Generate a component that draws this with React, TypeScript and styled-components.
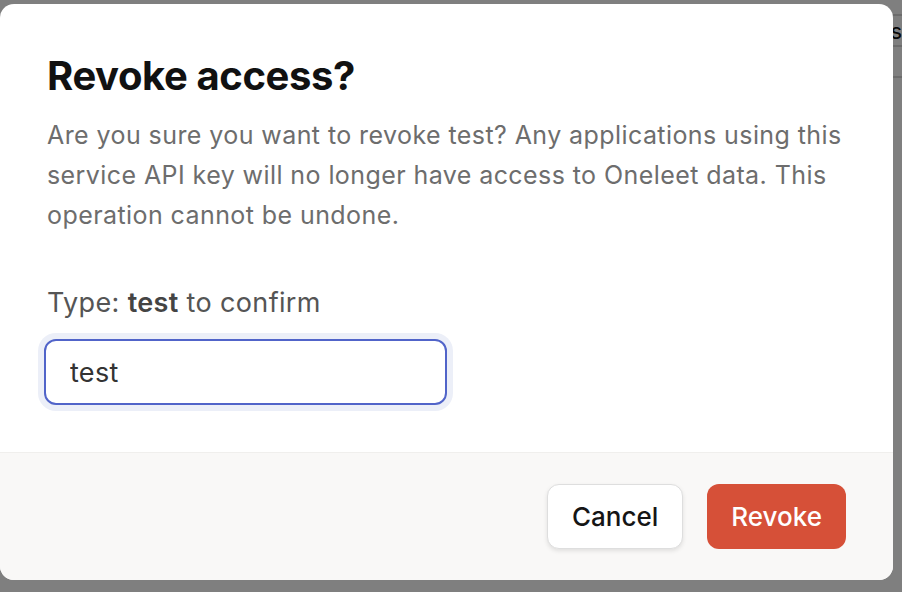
import React, { useState } from "react";
import styled, { createGlobalStyle } from "styled-components";

const GlobalStyle = createGlobalStyle`
    html, body {
        margin: 0;
        height: 100%;
        background: #ffffff;
        font-family: Inter, "Noto Sans", "DejaVu Sans", sans-serif;
    }

    * {
        box-sizing: border-box;
    }
`;

const Page = styled.div`
    height: 592px;
    overflow: hidden;
    padding-top: 14px;
`;

const TableRow = styled.div`
    height: 31px;
    border-top: 2px solid #d9d9d9;
    display: flex;
    justify-content: flex-end;
    align-items: center;
    font-size: 22px;
    color: #111;
`;

const Overlay = styled.div`
    position: fixed;
    inset: 0;
    background: rgba(0, 0, 0, 0.5);
    display: flex;
    align-items: flex-start;
    padding-top: 4px;
`;

const Dialog = styled.div`
    width: 893px;
    height: 576px;
    background: #ffffff;
    border-radius: 14px;
    overflow: hidden;
    display: flex;
    flex-direction: column;
`;

const Body = styled.div`
    flex: 1;
    padding: 48px 47px 0;
`;

const Title = styled.h2`
    margin: 0;
    font-size: 40px;
    line-height: 48px;
    font-weight: 700;
    letter-spacing: -0.4px;
    color: #111111;
`;

const Description = styled.p`
    margin: 15px 0 0;
    font-size: 25px;
    line-height: 40px;
    letter-spacing: 0.42px;
    color: #6d6d6d;
`;

const Label = styled.label`
    display: block;
    margin-top: 51px;
    font-size: 27px;
    line-height: 34px;
    letter-spacing: 0.35px;
    color: #555555;

    strong {
        font-weight: 600;
        color: #444444;
    }
`;

const Input = styled.input`
    display: block;
    margin: 19px -3px 0;
    width: 403px;
    height: 66px;
    padding: 0 24px;
    border: 2px solid #5164c9;
    border-radius: 12px;
    box-shadow: 0 0 0 6px #eceff8;
    outline: none;
    font-family: inherit;
    font-size: 27px;
    letter-spacing: 0.3px;
    color: #333333;
    background: #ffffff;
`;

const Footer = styled.div`
    height: 128px;
    background: #f9f8f7;
    border-top: 1px solid #f0efed;
    display: flex;
    justify-content: flex-end;
    align-items: center;
    gap: 24px;
    padding: 0 47px;
`;

const Button = styled.button<{ $danger?: boolean }>`
    height: 65px;
    padding: 0 24px;
    border-radius: 12px;
    font-family: inherit;
    font-size: 26px;
    font-weight: 500;
    cursor: pointer;
    border: ${({ $danger }) => ($danger ? "none" : "1px solid #dedede")};
    background: ${({ $danger }) => ($danger ? "#d65038" : "#ffffff")};
    color: ${({ $danger }) => ($danger ? "#ffffff" : "#151515")};
    box-shadow: ${({ $danger }) =>
        $danger ? "none" : "0 2px 4px rgba(0, 0, 0, 0.1)"};
`;

export default function App() {
    const [value, setValue] = useState("test");

    return (
        <>
            <GlobalStyle />
            <Page>
                <TableRow>s</TableRow>
                <TableRow />
                <TableRow />
            </Page>
            <Overlay>
                <Dialog role="dialog">
                    <Body>
                        <Title>Revoke access?</Title>
                        <Description>
                            Are you sure you want to revoke test? Any
                            applications using this service API key will no
                            longer have access to Oneleet data. This operation
                            cannot be undone.
                        </Description>
                        <Label>
                            Type: <strong>test</strong> to confirm
                        </Label>
                        <Input
                            value={value}
                            onChange={(e) => setValue(e.target.value)}
                        />
                    </Body>
                    <Footer>
                        <Button>Cancel</Button>
                        <Button $danger>Revoke</Button>
                    </Footer>
                </Dialog>
            </Overlay>
        </>
    );
}
